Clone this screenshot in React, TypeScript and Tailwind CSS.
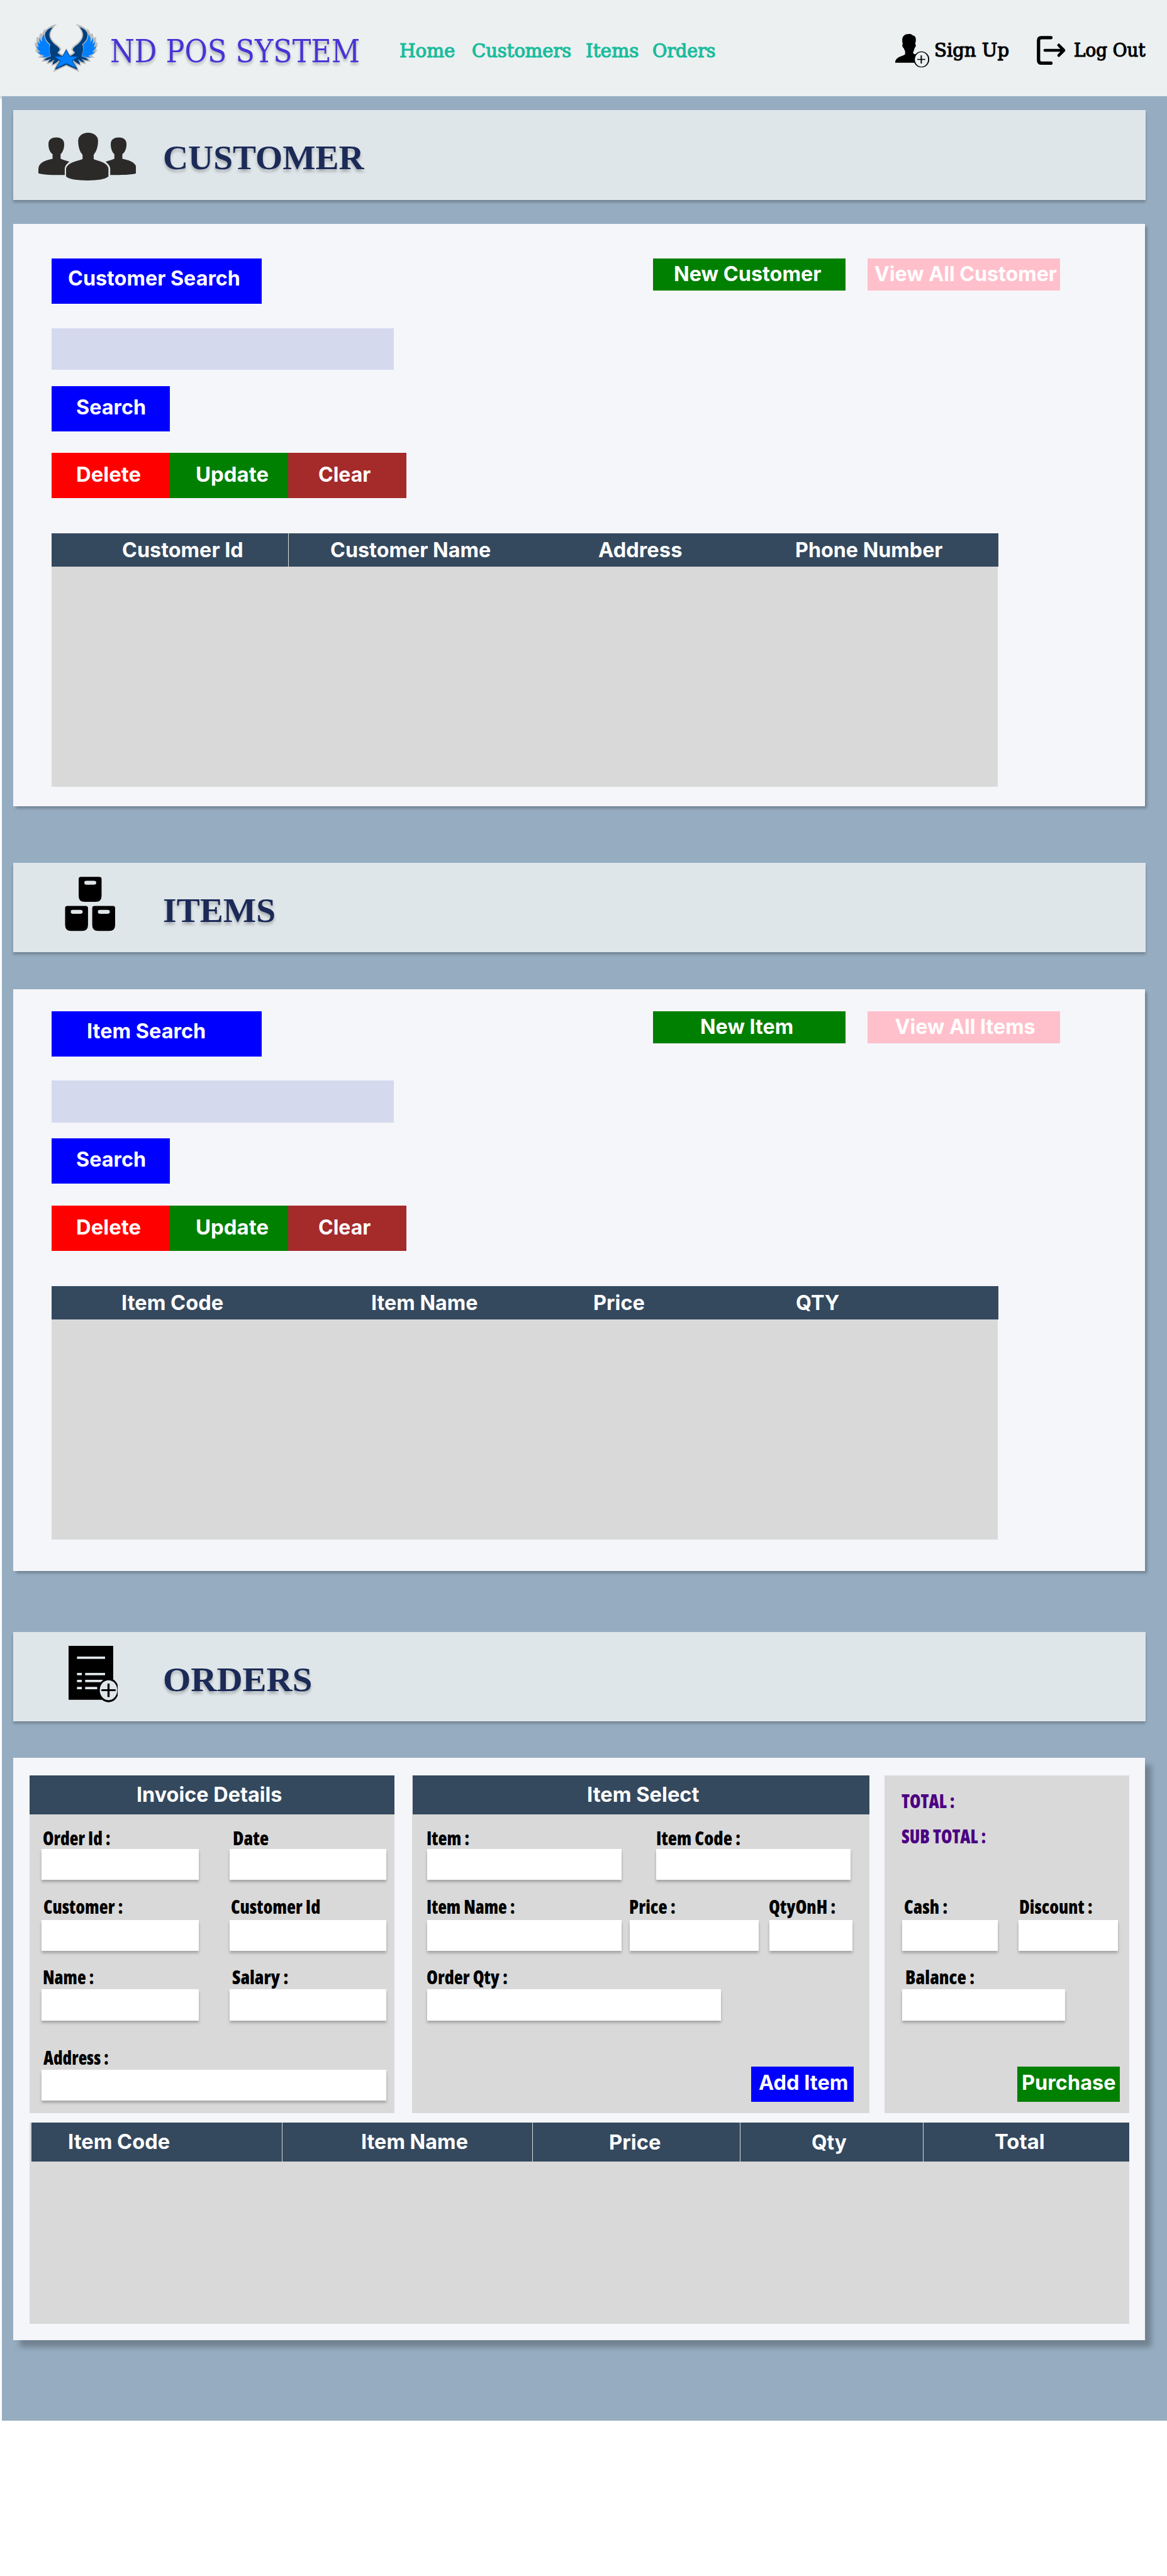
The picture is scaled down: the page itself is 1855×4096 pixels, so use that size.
import React, { useLayoutEffect, useRef, useState } from "react";

/** A single line of text whose advance width is set to `w` pixels. */
function Fit({ w, className = "", children }: { w: number; className?: string; children: string }) {
  const ref = useRef<HTMLSpanElement>(null);
  const [scale, setScale] = useState(1);
  useLayoutEffect(() => {
    if (ref.current) setScale(w / ref.current.offsetWidth);
  }, [w, children]);
  return (
    <span className={`block shrink-0 whitespace-nowrap ${className}`} style={{ width: w }}>
      <span ref={ref} className="inline-block origin-left" style={{ transform: `scaleX(${scale})` }}>
        {children}
      </span>
    </span>
  );
}

/** Caption of a button or a table column. */
function Caption({ w, children }: { w: number; children: string }) {
  return (
    <Fit w={w - 1} className="ml-px">
      {children}
    </Fit>
  );
}

function WingLogo() {
  const grey =
    "M265 95 L225 104 Q190 118 161 150 L163 132 Q142 152 132 184 L116 176 Q106 195 106 217 L84 209 Q78 235 84 264 L67 256 Q66 285 80 308 L82 325 L70 322 Q78 345 95 358 L120 376 L93 394 L150 396 L128 429 Q160 428 185 425 L170 452 Q200 447 225 440 L214 470 Q240 460 260 450 L231 523 L348 468 L348 306 L322 366 Q290 358 283 345 Q303 332 301 312 Q292 294 250 264 Q208 228 208 190 Q212 138 265 95Z";
  const navy =
    "M231 122 Q180 133 160 175 Q148 230 205 275 Q185 320 210 383 Q165 392 150 418 Q185 416 215 404 Q190 420 187 438 Q215 432 245 408 Q226 430 224 457 Q255 444 285 418 L293 424 L248 503 L348 458 L348 324 L315 380 Q275 365 270 345 Q294 330 287 314 Q280 300 245 275 Q198 235 197 190 Q200 150 231 122Z";
  const blue =
    "M151 185 Q148 238 198 277 Q187 320 208 380 Q160 395 121 390 Q145 388 150 376 Q112 368 89 341 Q105 346 118 345 Q90 322 80 289 Q92 300 103 303 Q90 275 93 247 Q101 266 116 273 Q103 245 112 218 Q117 242 134 254 Q121 215 151 185Z";
  return (
    <svg viewBox="66 93 563 432" preserveAspectRatio="none" className="mt-[38.1px] h-[77px] w-[100.6px] shrink-0">
      {["", "translate(695 0) scale(-1 1)"].map((t) => (
        <g key={t} transform={t}>
          <path d={grey} fill="#bdbdbd" />
          <path d={navy} fill="#00407f" />
          <path d={blue} fill="#0080ff" stroke="#bdbdbd" strokeWidth="5" paintOrder="stroke" />
        </g>
      ))}
      <path
        d="M347.5 330 L378 384 L450 386 L397 421 L436 486 L347.5 444 L259 486 L298 421 L245 386 L317 384Z"
        fill="#0080ff"
        stroke="#00407f"
        strokeWidth="10"
        paintOrder="stroke"
      />
    </svg>
  );
}

function AddUserIcon() {
  return (
    <svg viewBox="248 253 165 250" preserveAspectRatio="none" className="mt-[53.5px] h-[53.3px] w-[54px] shrink-0">
      <path d="M315 253 C295 253 282 268 282 300 C282 312 283 320 285 326 C280 336 283 354 290 360 C292 372 294 376 296 382 V403 C290 420 248 418 248 468 H350 V405 C338 405 335 400 335 388 C340 375 340 368 342 358 C349 350 350 335 345 326 C352 290 348 265 333 263 C328 255 322 253 315 253Z" />
      <ellipse cx="375.5" cy="443" rx="35" ry="57" fill="#ecf0f1" stroke="#000" strokeWidth="6" />
      <path d="M355 440h39v6h-39z M371.5 412h6v61h-6z" />
    </svg>
  );
}

function LogOutIcon() {
  return (
    <svg
      viewBox="0 0 46.2 46.2"
      fill="none"
      stroke="#000"
      strokeWidth="5.3"
      strokeLinecap="round"
      strokeLinejoin="round"
      className="mt-[57.4px] h-[46.2px] w-[46.2px] shrink-0"
    >
      <path d="M22.5 2.8H7.5Q2.8 2.8 2.8 7.5V38.7Q2.8 43.4 7.5 43.4H22.5" />
      <path d="M13 23H42M35 14.8L43 23L35 31.2" strokeWidth="4.7" />
    </svg>
  );
}

function PeopleIcon() {
  const side =
    "M217 1030 C200 1030 187 1045 187 1080 C187 1115 193 1140 203 1155 V1190 C190 1197 150 1205 148 1265 V1298 C165 1310 200 1312 250 1311 V1262 C252 1235 262 1222 268 1212 C255 1203 242 1197 234 1190 V1155 C242 1140 248 1115 248 1080 C248 1045 234 1030 217 1030Z";
  return (
    <svg
      viewBox="148 985 379 372"
      preserveAspectRatio="none"
      fill="#2b2a29"
      className="mt-[34.1px] ml-[39.4px] h-[79px] w-[155.7px]"
    >
      <path d={side} />
      <path d={side} transform="translate(676 0) scale(-1 1)" />
      <path
        d="M340 995 C320 995 302 1020 302 1055 C302 1110 310 1140 319 1160 V1192 C300 1207 262 1215 255 1262 V1322 C265 1344 300 1352 338 1352 C376 1352 408 1344 419 1322 V1262 C415 1215 378 1207 362 1192 V1160 C370 1140 379 1110 379 1055 C379 1020 362 995 340 995Z"
        stroke="#dfe6e9"
        strokeWidth="4"
        paintOrder="stroke"
      />
    </svg>
  );
}

function BoxesIcon() {
  const box =
    "M8 0H68q8 0 8 10V88q0 28-20 28H20q-20 0-20-28V10q0-10 8-10ZM26 18q-7 0-7 6v6q0 6 7 6h24q8 0 8-6v-6q0-6-8-6Z";
  return (
    <svg
      viewBox="216 466 168 254"
      preserveAspectRatio="none"
      fillRule="evenodd"
      className="mt-[22.3px] ml-[82px] h-[87px] w-[80.5px]"
    >
      <path d={box} transform="translate(262 467)" />
      <path d={box} transform="translate(217 602)" />
      <path d={box} transform="translate(307 602)" />
    </svg>
  );
}

function OrderIcon() {
  return (
    <svg
      viewBox="226 479 164 238"
      preserveAspectRatio="none"
      className="mt-[22.5px] ml-[87.4px] h-[89.8px] w-[78.6px]"
    >
      <path d="M226 479h148v227h-148z" />
      <path
        fill="#dfe6e9"
        d="M254 524h93v10h-93zM254 593h16v10h-16zM281 593h66v10h-66zM254 622h16v10h-16zM281 622h60v10h-60zM254 652h16v10h-16zM281 652h40v10h-40z"
      />
      <ellipse cx="358.5" cy="666" rx="34" ry="51" fill="#000" />
      <ellipse cx="358.5" cy="666" rx="29" ry="42" fill="#dfe6e9" />
      <path stroke="#000" strokeWidth="8" strokeLinecap="round" d="M338 666H379" />
      <path stroke="#000" strokeWidth="7" strokeLinecap="round" d="M358.5 641V692" />
    </svg>
  );
}

const serifShadow = "[text-shadow:0_4.3px_4.3px_rgba(0,0,0,0.25)]";

function Banner({ title, w, icon, className }: { title: string; w: number; icon: React.ReactNode; className: string }) {
  return (
    <div
      className={`ml-[18.1px] flex h-[142.8px] w-[1799.2px] bg-[#dfe6e9] shadow-[0_4.3px_4.3px_rgba(0,0,0,0.25)] ${className}`}
    >
      <div className="w-[237.8px] shrink-0">{icon}</div>
      <Fit
        w={w}
        className={`font-['Liberation_Serif',serif] text-[54.8px] leading-[152.6px] font-bold text-[#1b2a57] ${serifShadow}`}
      >
        {title}
      </Fit>
    </div>
  );
}

type Cell = { text: string; w: number; className: string; divider?: boolean };

function HeaderRow({ cells, className }: { cells: Cell[]; className: string }) {
  return (
    <div className={`flex bg-[#34495e] text-white ${className}`}>
      {cells.map((c) => (
        <React.Fragment key={c.text}>
          <div className={`shrink-0 ${c.className}`}>
            <Caption w={c.w}>{c.text}</Caption>
          </div>
          {c.divider && <div className="w-[1.2px] shrink-0 bg-[#d9d9d9]" />}
        </React.Fragment>
      ))}
    </div>
  );
}

type PanelButton = { text: string; w: number; className: string };

type SearchPanelProps = {
  className: string;
  title: PanelButton;
  create: PanelButton;
  viewAll: PanelButton;
  cells: Cell[];
};

function SearchPanel({ className, title, create, viewAll, cells }: SearchPanelProps) {
  return (
    <div
      className={`ml-[17.3px] h-[925.4px] w-[1799.2px] bg-[#f5f6fa] pl-[61.9px] shadow-[4.3px_4.3px_4.3px_rgba(0,0,0,0.25)] ${className}`}
    >
      <div className="flex items-start text-white">
        <div className={`h-[72px] w-[334px] bg-[#0000ff] ${title.className}`}>
          <Caption w={title.w}>{title.text}</Caption>
        </div>
        <div className={`ml-[621.7px] h-[51.2px] w-[306.1px] bg-[#008000] leading-[49px] ${create.className}`}>
          <Caption w={create.w}>{create.text}</Caption>
        </div>
        <div className={`ml-[35.1px] h-[51.2px] w-[306.1px] bg-[#ffc0cb] leading-[49px] ${viewAll.className}`}>
          <Caption w={viewAll.w}>{viewAll.text}</Caption>
        </div>
      </div>
      <div className="mt-[38.3px] h-[66.6px] w-[543.4px] bg-[#d4d9ee]" />
      <div className="mt-[25.6px] h-[71.9px] w-[187.9px] bg-[#0000ff] pl-[37.3px] leading-[67px] text-white">
        <Caption w={112.5}>Search</Caption>
      </div>
      <div className="mt-[34.7px] flex h-[71.9px] leading-[70.4px] text-white">
        <div className="w-[187.9px] bg-[#ff0000] pl-[37.3px]">
          <Caption w={104}>Delete</Caption>
        </div>
        <div className="w-[187.8px] bg-[#008000] pl-[39.2px]">
          <Caption w={116.5}>Update</Caption>
        </div>
        <div className="w-[187.9px] bg-[#a52a2a] pl-[46.6px]">
          <Caption w={84.5}>Clear</Caption>
        </div>
      </div>
      <HeaderRow cells={cells} className="mt-[55.7px] h-[53.5px] w-[1504.4px] leading-[54.8px]" />
      <div className="h-[350px] w-[1503.2px] bg-[#d9d9d9]" />
    </div>
  );
}

function Label({ w, className = "", children }: { w: number; className?: string; children: string }) {
  return (
    <div className="pl-[0.8px]">
      <Fit
        w={w - 0.8}
        className={`font-['Open_Sans',sans-serif] text-[30.5px] leading-[30px] font-extrabold [font-stretch:75%] ${className}`}
      >
        {children}
      </Fit>
    </div>
  );
}

function Field({ label, w, labelClass, boxClass }: { label: string; w: number; labelClass: string; boxClass: string }) {
  return (
    <div>
      <Label w={w} className={labelClass}>
        {label}
      </Label>
      <div className={`h-[49.5px] bg-white shadow-[0_4.3px_4.3px_rgba(0,0,0,0.25)] ${boxClass}`} />
    </div>
  );
}

function Header() {
  const nav = "font-['DejaVu_Serif_Condensed','DejaVu_Serif',serif] text-[30.6px] [-webkit-text-stroke:1.2px]";
  return (
    <header className="flex h-[153.4px] items-start bg-[#ecf0f1] pl-[54.9px] font-normal shadow-[0_4.3px_4.3px_rgba(0,0,0,0.25)]">
      <WingLogo />
      <Fit
        w={397}
        className={`ml-[20px] h-[153px] font-['DejaVu_Serif_Condensed','DejaVu_Serif',serif] text-[51px] leading-[163.8px] text-[#4733d6] ${serifShadow}`}
      >
        ND POS SYSTEM
      </Fit>
      <nav className={`ml-[63px] flex h-[153px] leading-[161.6px] text-[#1abc9c] ${nav}`}>
        <Fit w={88.5}>Home</Fit>
        <Fit w={158} className="ml-[26px]">Customers</Fit>
        <Fit w={84} className="ml-[23.5px]">Items</Fit>
        <Fit w={100.5} className="ml-[21.5px]">Orders</Fit>
      </nav>
      <div className={`ml-[285.5px] flex h-[153px] items-start leading-[159.4px] text-black ${nav}`}>
        <AddUserIcon />
        <Fit w={119.5} className="ml-[8.5px]">Sign Up</Fit>
        <div className="w-[43.4px]" />
        <LogOutIcon />
        <Fit w={114} className="ml-[12.5px]">Log Out</Fit>
      </div>
    </header>
  );
}

function InvoiceCard() {
  return (
    <div className="h-[537.1px] w-[579.9px] bg-[#d9d9d9]">
      <div className="h-[62.3px] bg-[#34495e] pl-[168.9px] leading-[61.8px] text-white">
        <Caption w={232.5}>Invoice Details</Caption>
      </div>
      <div className="flex gap-[49.1px] pt-[21.7px] pl-[19.2px]">
        <Field label="Order Id :" w={109} labelClass="ml-[1px]" boxClass="mt-[3px] w-[249.2px]" />
        <Field label="Date" w={57.5} labelClass="ml-[4px]" boxClass="mt-[3px] w-[249.2px]" />
      </div>
      <div className="flex gap-[49.1px] pt-[26.9px] pl-[19.2px]">
        <Field label="Customer :" w={127} labelClass="ml-[1.5px]" boxClass="mt-[6.6px] w-[249.2px]" />
        <Field label="Customer Id" w={143.5} labelClass="ml-[1px]" boxClass="mt-[6.6px] w-[249.2px]" />
      </div>
      <div className="flex gap-[49.1px] pt-[25.6px] pl-[19.2px]">
        <Field label="Name :" w={82.5} labelClass="ml-[0.5px]" boxClass="mt-[5.4px] w-[249.2px]" />
        <Field label="Salary :" w={90} labelClass="ml-[3.5px]" boxClass="mt-[5.4px] w-[249.2px]" />
      </div>
      <div className="pt-[42.8px] pl-[19.2px]">
        <Field label="Address :" w={105} labelClass="ml-[2px]" boxClass="mt-[5.3px] w-[547.5px]" />
      </div>
    </div>
  );
}

function ItemCard() {
  return (
    <div className="ml-[27.5px] h-[537.1px] w-[727.8px] bg-[#d9d9d9] pl-[24px]">
      <div className="-ml-[22.8px] h-[62.3px] bg-[#34495e] pl-[276px] leading-[61.8px] text-white">
        <Caption w={179.5}>Item Select</Caption>
      </div>
      <div className="flex gap-[55.9px] pt-[21.7px]">
        <Field label="Item :" w={69} labelClass="-ml-[1.5px]" boxClass="mt-[3px] w-[308.9px]" />
        <Field label="Item Code :" w={134.5} labelClass="-ml-[1px]" boxClass="mt-[3px] w-[308.9px]" />
      </div>
      <div className="flex pt-[26.9px]">
        <Field label="Item Name :" w={141} labelClass="-ml-[1.5px]" boxClass="mt-[6.6px] w-[308.9px]" />
        <div className="w-[13.7px]" />
        <Field label="Price :" w={74.5} labelClass="-ml-[2px]" boxClass="mt-[6.6px] w-[204.4px]" />
        <div className="w-[16.9px]" />
        <Field label="QtyOnH :" w={107} labelClass="-ml-[1.5px]" boxClass="mt-[6.6px] w-[132.2px]" />
      </div>
      <div className="pt-[25.6px]">
        <Field label="Order Qty :" w={129.5} labelClass="-ml-[1px]" boxClass="mt-[5.4px] w-[467.5px]" />
      </div>
      <div className="mt-[72.9px] ml-[515px] h-[56.1px] w-[162.9px] bg-[#0000ff] pl-[11.8px] leading-[52.6px] text-white">
        <Caption w={143.5}>Add Item</Caption>
      </div>
    </div>
  );
}

function TotalsCard() {
  return (
    <div className="ml-[24px] h-[537.1px] w-[388.3px] bg-[#d9d9d9] pt-[24.9px] pl-[27.7px]">
      <Label w={85} className="-ml-[2px] text-[#4b0082]">TOTAL :</Label>
      <div className="h-[26px]" />
      <Label w={135.5} className="-ml-[1.5px] text-[#4b0082]">SUB TOTAL :</Label>
      <div className="flex gap-[33px] pt-[82.5px]">
        <Field label="Cash :" w={70.5} labelClass="ml-[2px]" boxClass="mt-[6.6px] w-[151.5px]" />
        <Field label="Discount :" w={117.5} labelClass="ml-[1px]" boxClass="mt-[6.6px] w-[158.1px]" />
      </div>
      <div className="pt-[25.6px]">
        <Field label="Balance :" w={111} labelClass="ml-[4.5px]" boxClass="mt-[5.4px] w-[258.4px]" />
      </div>
      <div className="mt-[72.9px] ml-[182.7px] h-[56.1px] w-[162.9px] bg-[#008000] pl-[6.5px] leading-[52.6px] text-white">
        <Caption w={150.5}>Purchase</Caption>
      </div>
    </div>
  );
}

const customerCells: Cell[] = [
  { text: "Customer Id", w: 194, className: "w-[375.7px] pl-[110.4px]", divider: true },
  { text: "Customer Name", w: 256, className: "w-[340.7px] pl-[65px]" },
  { text: "Address", w: 134, className: "w-[350px] pl-[150px]" },
  { text: "Phone Number", w: 235.5, className: "pl-[112.8px]" },
];

const itemCells: Cell[] = [
  { text: "Item Code", w: 163, className: "w-[377.1px] pl-[110px]" },
  { text: "Item Name", w: 170.5, className: "w-[340.5px] pl-[129.6px]" },
  { text: "Price", w: 83, className: "w-[350px] pl-[142.3px]" },
  { text: "QTY", w: 70, className: "pl-[114px]" },
];

const orderCells: Cell[] = [
  { text: "Item Code", w: 163, className: "w-[397.6px] pl-[57px] leading-[61.4px]", divider: true },
  { text: "Item Name", w: 171, className: "w-[397.2px] pl-[123.7px] leading-[61.4px]", divider: true },
  { text: "Price", w: 83.5, className: "w-[328.3px] pl-[119.5px] leading-[64px]", divider: true },
  { text: "Qty", w: 57, className: "w-[289.7px] pl-[112.2px] leading-[64px]", divider: true },
  { text: "Total", w: 80.5, className: "pl-[112.6px] leading-[61.4px]" },
];

export default function App() {
  return (
    <div className="min-h-[4096px] w-[1855px] overflow-hidden bg-white font-['Inter',sans-serif] text-[32.2px] font-bold">
      <Header />
      <main className="ml-[3.3px] flex h-[3695.9px] flex-col bg-[#96adc1]">
        <Banner title="CUSTOMER" w={320} icon={<PeopleIcon />} className="mt-[21.5px]" />
        <SearchPanel
          className="mt-[38.6px] pt-[55px]"
          title={{ text: "Customer Search", w: 275, className: "pl-[24.4px] leading-[63px]" }}
          create={{ text: "New Customer", w: 235.5, className: "pl-[32px]" }}
          viewAll={{ text: "View All Customer", w: 291, className: "pl-[9.3px]" }}
          cells={customerCells}
        />
        <Banner title="ITEMS" w={179.5} icon={<BoxesIcon />} className="mt-[90px]" />
        <SearchPanel
          className="mt-[58.2px] pt-[35.3px]"
          title={{ text: "Item Search", w: 190.5, className: "pl-[54.4px] leading-[64.4px]" }}
          create={{ text: "New Item", w: 149.5, className: "pl-[74.2px]" }}
          viewAll={{ text: "View All Items", w: 224, className: "pl-[42.1px]" }}
          cells={itemCells}
        />
        <Banner title="ORDERS" w={237} icon={<OrderIcon />} className="mt-[96.5px]" />
        <div className="mt-[57.8px] ml-[17.3px] h-[925.6px] w-[1799.2px] bg-[#f5f6fa] pt-[27.8px] pl-[26.7px] shadow-[9.6px_10.7px_8.6px_rgba(0,0,0,0.25)]">
          <div className="flex">
            <InvoiceCard />
            <ItemCard />
            <TotalsCard />
          </div>
          <div className="mt-[14.8px] h-[320px] w-[1747.5px] bg-[#d9d9d9] pl-[3px]">
            <HeaderRow cells={orderCells} className="h-[62.3px]" />
          </div>
        </div>
      </main>
    </div>
  );
}
